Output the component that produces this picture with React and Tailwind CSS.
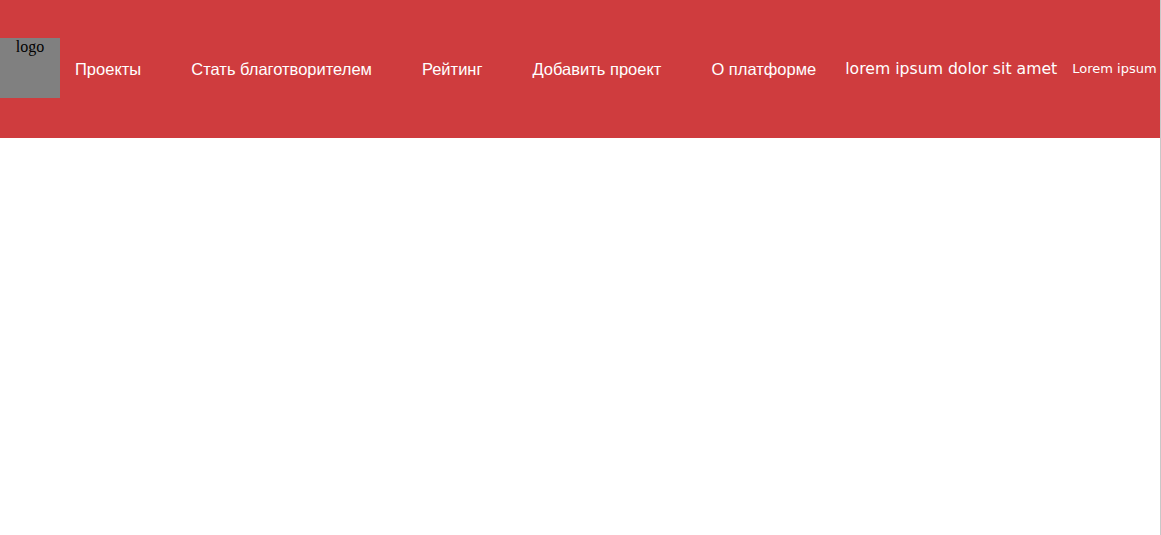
export default function App() {
  const links = ['Проекты', 'Стать благотворителем', 'Рейтинг', 'Добавить проект', 'О платформе']

  return (
    <div className="w-[1161px] h-[535px] bg-white overflow-hidden border-r border-[#c8c8c8]">
      <header className="h-[138px] bg-[#cf3c3e] flex items-center whitespace-nowrap overflow-hidden">
        <div className="w-[60px] h-[60px] shrink-0 mb-[2px] bg-[#808080] text-center text-black text-[16px] leading-[18px] font-['Liberation_Serif',serif]">
          logo
        </div>
        <nav className="flex items-center gap-[50px] ml-[15px] text-white text-[16.5px] font-['Liberation_Sans',Arial,sans-serif]">
          {links.map((l) => (
            <a key={l} href="#" className="shrink-0">
              {l}
            </a>
          ))}
        </nav>
        <span className="ml-[29px] shrink-0 text-white text-[15.7px] font-['DejaVu_Sans',sans-serif]">
          lorem ipsum dolor sit amet
        </span>
        <span className="ml-[15px] shrink-0 text-white text-[13px] font-['DejaVu_Sans',sans-serif]">
          Lorem ipsum
        </span>
      </header>
    </div>
  )
}
